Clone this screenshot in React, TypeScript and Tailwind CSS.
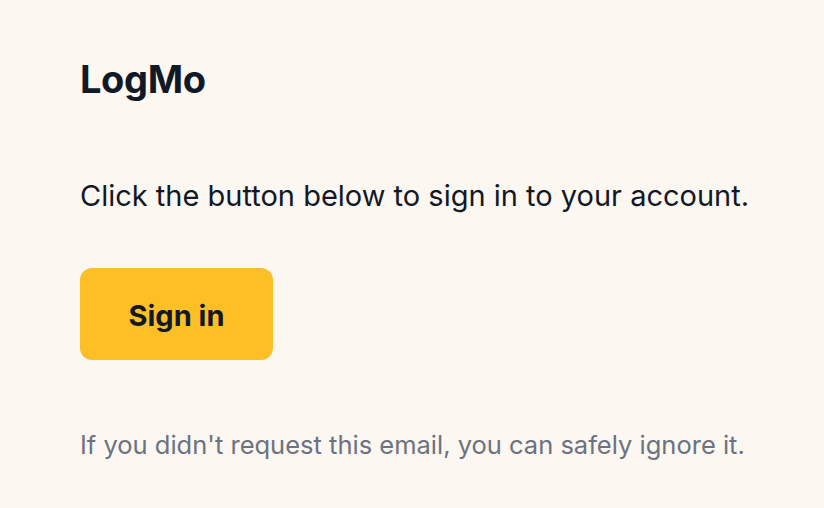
export default function App() {
  return (
    <div
      className="min-h-[508px] w-[824px] bg-[#fcf7f1] text-[#111827]"
      style={{ fontFamily: "Inter, 'Noto Sans', sans-serif" }}
    >
      <div className="pl-[80px] pt-[55px]">
        <h1 className="text-[38px] font-bold leading-[48px] tracking-[-0.01em]">LogMo</h1>
        <p className="mt-[73px] whitespace-nowrap text-[29px] leading-[40px]">
          Click the button below to sign in to your account.
        </p>
        <div className="mt-[52px]">
          <button className="h-[92px] w-[193px] rounded-[12px] bg-[#fcbf26] pt-[3px] text-[29px] font-bold text-[#111827]">
            Sign in
          </button>
        </div>
        <p className="mt-[69px] whitespace-nowrap text-[25.5px] leading-[32px] text-[#6b7280]">
          If you didn't request this email, you can safely ignore it.
        </p>
      </div>
    </div>
  );
}
